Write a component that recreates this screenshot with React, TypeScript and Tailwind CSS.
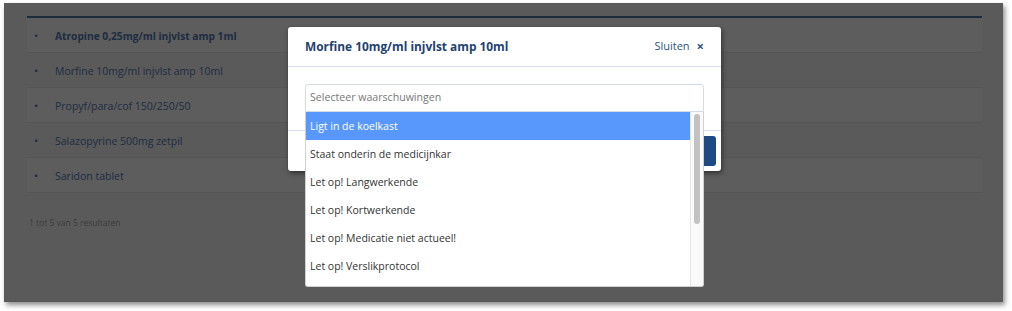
const rows = [
  { name: "Atropine 0,25mg/ml injvlst amp 1ml", bold: true },
  { name: "Morfine 10mg/ml injvlst amp 10ml", bold: false },
  { name: "Propyf/para/cof 150/250/50", bold: false },
  { name: "Salazopyrine 500mg zetpil", bold: false },
  { name: "Saridon tablet", bold: false },
];

const warnings = [
  "Ligt in de koelkast",
  "Staat onderin de medicijnkar",
  "Let op! Langwerkende",
  "Let op! Kortwerkende",
  "Let op! Medicatie niet actueel!",
  "Let op! Verslikprotocol",
];

export default function App() {
  return (
    <div className="w-[1012px] h-[311px] bg-white pt-[3px] pl-[4px] font-['Open_Sans',sans-serif]">
      <div className="relative w-[999px] h-[299px] bg-[#5a5a5a] shadow-[2px_3px_5px_rgba(0,0,0,0.45)] overflow-visible">
        {/* Table behind the backdrop */}
        <div className="pt-[13px] pl-[23px] w-[978px]">
          <div className="border-t-2 border-[#1e2b3c]">
            {rows.map((r, i) => (
              <div
                key={r.name}
                className={`h-[35px] pt-[3px] flex items-center border-b border-[#555555] ${i % 2 === 0 ? "bg-[#5d5d5d]" : "bg-[#5a5a5a]"}`}
              >
                <span className="w-[28px] pl-[7px] text-[11px] text-[#1e2c42]">•</span>
                <span className={`text-[#1e2c42] ${r.bold ? "font-bold text-[10.2px]" : "text-[10.5px]"}`}>{r.name}</span>
              </div>
            ))}
          </div>
          <p className="mt-[24px] pl-[2px] text-[8.5px] text-[#3a3a3a]">1 tot 5 van 5 resultaten</p>
        </div>

        {/* Modal */}
        <div className="absolute left-[284px] top-[24px] w-[433px] h-[144px] bg-white rounded-[3px] shadow-[1px_2px_5px_rgba(0,0,0,0.5)]">
          <div className="h-[40px] flex items-center justify-between px-[17px] border-b border-[#d6e1ee]">
            <h3 className="text-[11.9px] font-bold text-[#1f4270]">Morfine 10mg/ml injvlst amp 10ml</h3>
            <div className="flex items-center gap-[7px] text-[11px] text-[#2c5384]">
              <span>Sluiten</span>
              <span className="font-bold text-[13px] leading-none">×</span>
            </div>
          </div>
          <div className="h-[63px] pt-[17px] px-[17px]">
            <div className="h-[28px] border border-[#d5dbe3] rounded-t-[3px] flex items-center px-[4px] text-[10.6px] text-[#777777]">
              Selecteer waarschuwingen
            </div>
          </div>
          <div className="h-[41px] border-t border-[#d6e1ee] flex justify-end items-center pr-[5px]">
            <div className="w-[60px] h-[30px] rounded-[3px] bg-[#1d4a85]" />
          </div>
        </div>

        {/* Select dropdown */}
        <div className="absolute left-[301px] top-[109px] w-[399px] h-[175px] bg-white border border-[#d0d0d0] border-t-0 rounded-b-[3px] flex overflow-hidden">
          <ul className="flex-1">
            {warnings.map((w, i) => (
              <li
                key={w}
                className={`h-[28px] pt-[1px] flex items-center px-[4px] text-[10.5px] ${i === 0 ? "bg-[#5897fb] text-white" : "text-[#333333]"}`}
              >
                {w}
              </li>
            ))}
          </ul>
          <div className="w-[13px] bg-[#fafafa] border-l border-[#e6e6e6] pt-[2px] flex justify-center">
            <div className="w-[6px] h-[110px] rounded-full bg-[#c2c2c2]" />
          </div>
        </div>
      </div>
    </div>
  );
}
